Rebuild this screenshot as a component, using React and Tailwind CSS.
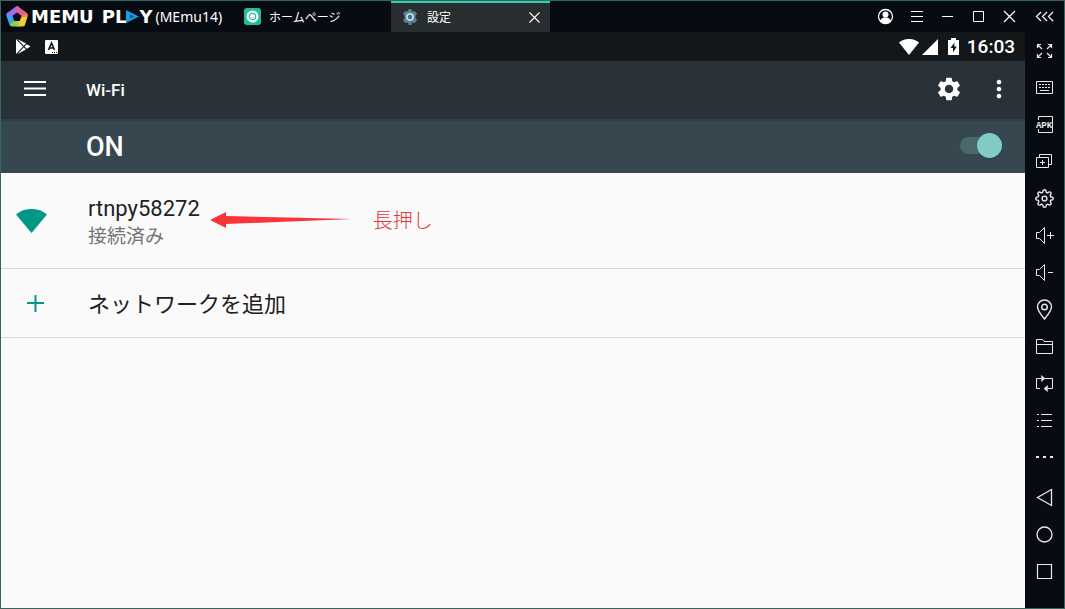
import React, { useState } from 'react';
import { MdSettings, MdMoreVert } from 'react-icons/md';
import { FiSettings } from 'react-icons/fi';

const Icon = ({ children, size = 19, ...rest }) => (
  <svg
    width={size}
    height={size}
    viewBox={`0 0 ${size} ${size}`}
    fill="none"
    stroke="currentColor"
    aria-hidden="true"
    {...rest}
  >
    {children}
  </svg>
);

const windowButtons = [
  {
    label: 'Account',
    icon: (
      <Icon size={17}>
        <circle cx="8.5" cy="8.5" r="7" strokeWidth="1.3" />
        <circle cx="8.5" cy="6.5" r="3" fill="currentColor" stroke="none" />
        <path d="M3 12.5c1.5-2.5 3.5-3 5.5-3s4 .5 5.5 3c-1.3 1.8-3.3 3-5.5 3s-4.2-1.2-5.5-3z" fill="currentColor" stroke="none" />
      </Icon>
    )
  },
  { label: 'Menu', icon: <Icon size={17}><path d="M3 3.5h12M3 8.5h12M3 13.5h12" /></Icon> },
  { label: 'Minimize', icon: <Icon size={17}><path d="M3 8.5h11" /></Icon> },
  { label: 'Maximize', icon: <Icon size={17}><path d="M3.5 3.5h10v10h-10z" /></Icon> },
  { label: 'Close', icon: <Icon size={17}><path d="M3 3l11 11M14 3L3 14" strokeWidth="1.2" /></Icon> }
];

const tools = [
  {
    label: 'Full screen',
    icon: <Icon><path d="M2.5 7V3.5H6M2.5 3.5L7 8M13 3.5h3.5V7M16.5 3.5L12 8M2.5 13v3.5H6M2.5 16.5L7 12M13 16.5h3.5V13M16.5 16.5L12 12" strokeWidth="1.2" /></Icon>
  },
  {
    label: 'Keyboard',
    icon: (
      <Icon>
        <path d="M1.5 3.5h16v12h-16z" />
        <path d="M4 6.5h12M4 9.5h12" strokeDasharray="2 1" />
        <path d="M5 12.5h9" />
      </Icon>
    )
  },
  {
    label: 'Install APK',
    icon: (
      <Icon>
        <path d="M3.5 5V1.5h14v16h-14V14" />
        <text x="9" y="13" textAnchor="middle" fontSize="9" fontFamily="Liberation Mono, monospace" fontWeight="bold" fill="currentColor" stroke="none">APK</text>
      </Icon>
    )
  },
  {
    label: 'Multi instance',
    icon: <Icon><path d="M4.5 5V2.5h12v10H14M1.5 5.5h12v10h-12zM5 10.5h5M7.5 8v5" /></Icon>
  },
  { label: 'Settings', icon: <FiSettings size={19} strokeWidth={1.8} aria-hidden="true" /> },
  {
    label: 'Volume up',
    icon: <Icon><path d="M1.5 6.5h3l5-5v16l-5-5h-3zM12 9.5h7M15.5 6v7" /></Icon>
  },
  {
    label: 'Volume down',
    icon: <Icon><path d="M1.5 6.5h3l5-5v16l-5-5h-3zM13 9.5h5" /></Icon>
  },
  {
    label: 'Location',
    icon: (
      <Icon size={21}>
        <path d="M10.5 20C6 14.5 3.5 11.500 3.5 8a7 7 0 0 1 14 0c0 3.5-2.5 6.5-7 12z" strokeWidth="1.4" />
        <circle cx="10.5" cy="8" r="2.8" strokeWidth="1.4" />
      </Icon>
    )
  },
  {
    label: 'Shared folder',
    icon: <Icon><path d="M1.5 16.5v-14h6l1.5 2h8.5v12zM1.5 7.5h16" /></Icon>
  },
  {
    label: 'Rotate',
    icon: (
      <Icon>
        <path d="M6 4.5H1.5v10H5M8 4.5" />
        <path d="M13 14.5h4.5v-10H10" />
        <path d="M6.5 1.5v6l3.5-3zM12.5 11.5v6l-3.5-3z" fill="currentColor" strokeWidth="0.5" />
      </Icon>
    )
  },
  {
    label: 'Operation list',
    icon: <Icon><path d="M2 3.5h2M6 3.5h11M2 9.5h2M6 9.5h11M2 15.5h2M6 15.5h11" /></Icon>
  },
  {
    label: 'More',
    icon: <Icon><path d="M1 9h3M8 9h3M15 9h3" strokeWidth="2" /></Icon>
  }
];

const navButtons = [
  { label: 'Back', icon: <Icon><path d="M16.5 1.5v16L2.500 9.5z" strokeWidth="1.3" /></Icon> },
  { label: 'Home', icon: <Icon><circle cx="9.5" cy="9.5" r="7.5" strokeWidth="1.3" /></Icon> },
  { label: 'Recent apps', icon: <Icon><path d="M2.5 2.5h14v14h-14z" strokeWidth="1.2" /></Icon> }
];

const Logo = () => (
  <svg width="22" height="21" viewBox="0 0 22 21" aria-hidden="true">
    <path d="M10 0.500L1 7l-1 2 9 2 3-4 1-6.500z" fill="#9a6cf5" />
    <path d="M10 0.500h2L21 7l-6 4-6-4z" fill="#e0609c" />
    <path d="M21 7l1 2-3 9-4-2-1-6z" fill="#f5803f" />
    <path d="M21.500 10.500L18.500 20l-2 .5H11l1-6 3-3z" fill="#f5c93a" />
    <path d="M13 20.500H5.500l-2-1.500 4-6 5 2z" fill="#8fd63f" />
    <path d="M0 8.500L3.500 19l4-3 .5-6z" fill="#3ea2ee" />
    <path d="M11 6.500l4.500 3.200-1.700 5.300H8.200L6.500 9.700z" fill="#070c13" />
  </svg>
);

const TitleBar = () => (
  <header className="flex h-[31px] shrink-0 items-stretch bg-[#070c13] text-white">
    <div className="flex w-[233px] items-center gap-[3px] pl-[5px]">
      <Logo />
      <h1 className="flex items-center gap-2 font-['DejaVu_Sans'] text-lg leading-5 font-bold">
        <span>MEMU</span>
        <span className="flex items-center">
          PL
          <svg width="13" height="13" viewBox="0 0 13 13" role="img" aria-label="A">
            <path d="M0 0l13 6.5L0 13z" fill="#1b9be0" />
            <path d="M4 4.500l4 2-4 2z" fill="#0b4f86" />
          </svg>
          Y
        </span>
      </h1>
      <span className="text-sm font-['Noto_Sans']">(MEmu14)</span>
    </div>
    <nav className="flex flex-1 font-['Noto_Sans_CJK_JP'] text-xs">
      <button className="flex w-[157px] items-center gap-2 pl-[10px]">
        <svg width="17" height="17" viewBox="0 0 17 17" aria-hidden="true">
          <rect width="17" height="17" rx="3" fill="#1fbf9a" />
          <circle cx="8.5" cy="8.5" r="6" fill="#fff" />
          <circle cx="8.5" cy="8.5" r="3.2" fill="none" stroke="#1fbf9a" strokeWidth="1.2" />
          <path d="M7 9.5h3" stroke="#8fdcc8" />
        </svg>
        ホームページ
      </button>
      <div className="flex w-[159px] items-center border-t-2 border-[#2fd0b0] bg-[#282d30] pr-[9px] pb-px pl-3">
        <button className="flex flex-1 items-center gap-[10px]">
          <svg width="14" height="16" viewBox="0 0 14 16" aria-hidden="true">
            <path d="M5.5 0h3l.5 2.5 2.5-.5L14 4.5 12.5 7v2l1.5 2.5-2.5 2.5-2.5-.5-.5 2.5h-3L5 13.5 2.5 14 0 11.5 1.5 9V7L0 4.5 2.5 2l2.5.5z" fill="#607d8b" />
            <circle cx="7" cy="8" r="4" fill="#b9dbe4" />
            <circle cx="7" cy="8" r="2.2" fill="#37718a" />
          </svg>
          設定
        </button>
        <button aria-label="Close tab">
          <Icon size={13}><path d="M1.5 1.5l10 10M11.5 1.5l-10 10" strokeWidth="1.1" /></Icon>
        </button>
      </div>
    </nav>
    <div className="flex">
      {windowButtons.map(({ label, icon }) => (
        <button key={label} aria-label={label} className="flex w-[31px] items-center justify-center">
          {icon}
        </button>
      ))}
      <button aria-label="Collapse toolbar" className="flex w-[39px] items-center justify-center">
        <Icon><path d="M6 5L1.5 9.5 6 14M12 5L7.5 9.5 12 14M18 5l-4.5 4.5L18 14" strokeWidth="1.2" /></Icon>
      </button>
    </div>
  </header>
);

const StatusBar = () => (
  <div className="flex h-[29px] shrink-0 items-center bg-[#141719] pr-[10px] pl-[14px] text-white">
    <svg width="16" height="15" viewBox="0 0 16 15" aria-hidden="true">
      <path d="M1 0l7 7.5L1 15zM2.5 0l8.5 4.5-2.3 2.3zM2.5 15l6.2-6.8 2.3 2.3zM11.8 5.2L15.5 7.5l-3.7 2.3L9.5 7.5z" fill="#fff" />
    </svg>
    <svg className="ml-[14px]" width="13" height="14" viewBox="0 0 13 14" aria-hidden="true">
      <rect width="13" height="14" rx="1" fill="#fff" />
      <path d="M3.5 10l3-7 3 7M4.5 8h4" fill="none" stroke="#141719" strokeWidth="1.6" />
      <path d="M7 12.5h5" stroke="#141719" strokeDasharray="1 1" />
    </svg>
    <div className="ml-auto flex items-center">
      <svg width="20" height="16" viewBox="0 0 20 16" aria-hidden="true">
        <path d="M0 3.5C6-1.2 14-1.2 20 3.5L10 16z" fill="#fff" />
      </svg>
      <svg className="ml-[3px]" width="16" height="16" viewBox="0 0 16 16" aria-hidden="true">
        <path d="M16 0v16H0z" fill="#fff" />
      </svg>
      <svg className="ml-[10px]" width="11" height="17" viewBox="0 0 11 17" aria-hidden="true">
        <path d="M3 0h5v2h3v15H0V2h3z" fill="#fff" />
        <path d="M6.5 4.5L2.5 10H5v4.5L8.8 8.5H6.3z" fill="#141719" />
      </svg>
      <span className="ml-2 pt-px text-[19px] leading-6 font-medium">16:03</span>
    </div>
  </div>
);

const ToolBar = () => (
  <aside className="flex w-[39px] shrink-0 flex-col bg-[#070c13] text-[#e6eaec]">
    {tools.map(({ label, icon }) => (
      <button key={label} aria-label={label} className="flex h-[37px] items-center justify-center">
        {icon}
      </button>
    ))}
    <div className="mt-[3px] flex flex-col">
      {navButtons.map(({ label, icon }) => (
        <button key={label} aria-label={label} className="flex h-[37px] items-center justify-center">
          {icon}
        </button>
      ))}
    </div>
  </aside>
);

const WifiSettings = () => {
  const [enabled, setEnabled] = useState(true);

  return (
    <main className="flex flex-1 flex-col">
      <div className="flex h-[58px] shrink-0 items-center bg-[#283238] pr-3 pb-[3px] pl-[23px] text-white">
        <button aria-label="Open navigation">
          <svg width="22" height="15" viewBox="0 0 22 15" aria-hidden="true">
            <path d="M0 1h22M0 7.5h22M0 14h22" stroke="currentColor" strokeWidth="2" />
          </svg>
        </button>
        <h2 className="ml-10 pt-[3px] text-[17px] leading-6 font-medium">Wi-Fi</h2>
        <button aria-label="Wi-Fi settings" className="ml-auto">
          <MdSettings size={28} />
        </button>
        <button aria-label="More options" className="ml-[22px]">
          <MdMoreVert size={28} />
        </button>
      </div>
      <div className="flex h-[54px] shrink-0 items-center border-t-2 border-[#303e45] bg-[#37474f] pr-[23px] pb-[3px] pl-[85px] text-white">
        <label htmlFor="wifi" className="flex-1 pt-[3px] text-[27px] leading-8 font-medium">
          {enabled ? 'ON' : 'OFF'}
        </label>
        <input
          id="wifi"
          type="checkbox"
          role="switch"
          checked={enabled}
          onChange={e => setEnabled(e.target.checked)}
          className="flex h-[17px] w-[42px] appearance-none items-center rounded-full bg-[#486a6d] before:size-[25px] before:shrink-0 before:rounded-full before:bg-[#80cbc4] before:shadow checked:justify-end"
        />
      </div>
      <ul className="text-[22px] leading-7 text-[#212121]">
        <li className="flex h-24 items-center border-b border-[#d8d8d8] pl-[15px]">
          <svg width="31" height="24" viewBox="0 0 31 24" aria-hidden="true">
            <path d="M0 5.500C9-1.800 22-1.800 31 5.500L15.500 24z" fill="#009688" />
          </svg>
          <button className="ml-[41px] pt-1 text-left">
            <span className="block">rtnpy58272</span>
            <span className="block text-[19px] text-[#757575]">接続済み</span>
          </button>
          <svg className="ml-[10px]" width="142" height="18" viewBox="0 0 142 18" aria-hidden="true">
            <path d="M0 8l16-8v4l126 3-126 5v4z" fill="#fb3438" />
          </svg>
          <span className="ml-[21px] text-xl font-light text-[#e0373c]">長押し</span>
        </li>
        <li className="flex h-[69px] items-center border-b border-[#d8d8d8] pl-[25px]">
          <svg width="18" height="18" viewBox="0 0 18 18" aria-hidden="true">
            <path d="M1 9h17M9.500 1v17" stroke="#009688" strokeWidth="2" />
          </svg>
          <button className="ml-11 pt-1">ネットワークを追加</button>
        </li>
      </ul>
    </main>
  );
};

const App = () => (
  <div className="flex min-h-screen flex-col border border-[#39665c] bg-[#fafafa] font-[Roboto,'Noto_Sans_CJK_JP',sans-serif]">
    <TitleBar />
    <div className="flex flex-1">
      <div className="flex flex-1 flex-col">
        <StatusBar />
        <WifiSettings />
      </div>
      <ToolBar />
    </div>
  </div>
);

export default App;
